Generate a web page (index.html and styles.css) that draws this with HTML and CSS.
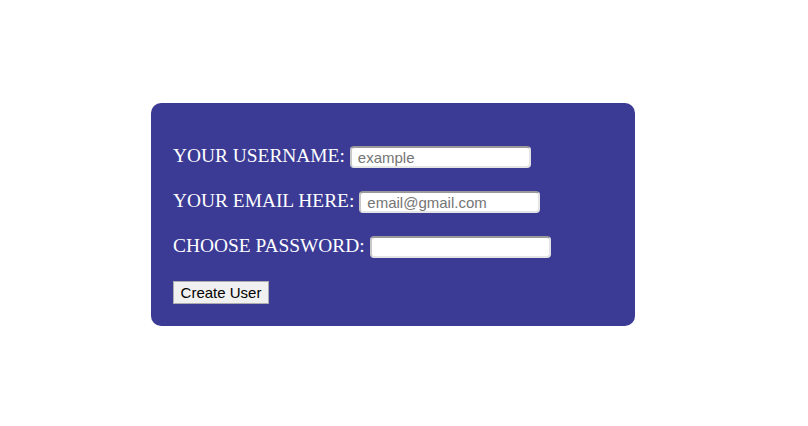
FILE: index.html
```html
<!DOCTYPE html>
<html>
<head>
<meta charset="utf-8">
<link rel="stylesheet" href="styles.css">
</head>
<body>
<div class="page">
  <form class="card">
    <div class="row"><label>YOUR USERNAME:</label> <input class="field" type="text" placeholder="example"></div>
    <div class="row"><label>YOUR EMAIL HERE:</label> <input class="field" type="text" placeholder="email@gmail.com"></div>
    <div class="row"><label>CHOOSE PASSWORD:</label> <input class="field" type="password"></div>
    <div class="row"><button class="btn" type="button">Create User</button></div>
  </form>
</div>
</body>
</html>
```
FILE: styles.css
```css
html, body {
  margin: 0;
  padding: 0;
  background: #ffffff;
}
.page {
  padding-top: 103px;
  padding-left: 151px;
}
.card {
  box-sizing: border-box;
  width: 484px;
  height: 223px;
  background: #3b3a95;
  border-radius: 10px;
  padding: 43px 22px 0 22px;
  display: flex;
  flex-direction: column;
  gap: 23px;
}
.row {
  display: flex;
  align-items: center;
  height: 22px;
  font-family: "Liberation Serif", "Times New Roman", serif;
  font-size: 19.4px;
  color: #ffffff;
}
.row label {
  margin-right: 5px;
  white-space: nowrap;
  position: relative;
  top: -1px;
}
.field {
  box-sizing: border-box;
  width: 181px;
  height: 22px;
  margin: 0;
  padding: 1px 6px 0 6px;
  background: #ffffff;
  border: 2px solid #e4e4e4;
  border-top-color: #9a9a9a;
  border-left-color: #c8c8c8;
  border-radius: 4px;
  font-family: "Liberation Sans", Arial, sans-serif;
  font-size: 15px;
  color: #000;
  outline: none;
}
.field::placeholder {
  color: #757575;
}
.btn {
  box-sizing: border-box;
  width: 96px;
  height: 23px;
  margin: 0;
  padding: 0;
  background: #f0f0f0;
  border: 1px solid #adadad;
  border-radius: 0;
  font-family: "Liberation Sans", Arial, sans-serif;
  font-size: 15px;
  color: #000;
}
```
